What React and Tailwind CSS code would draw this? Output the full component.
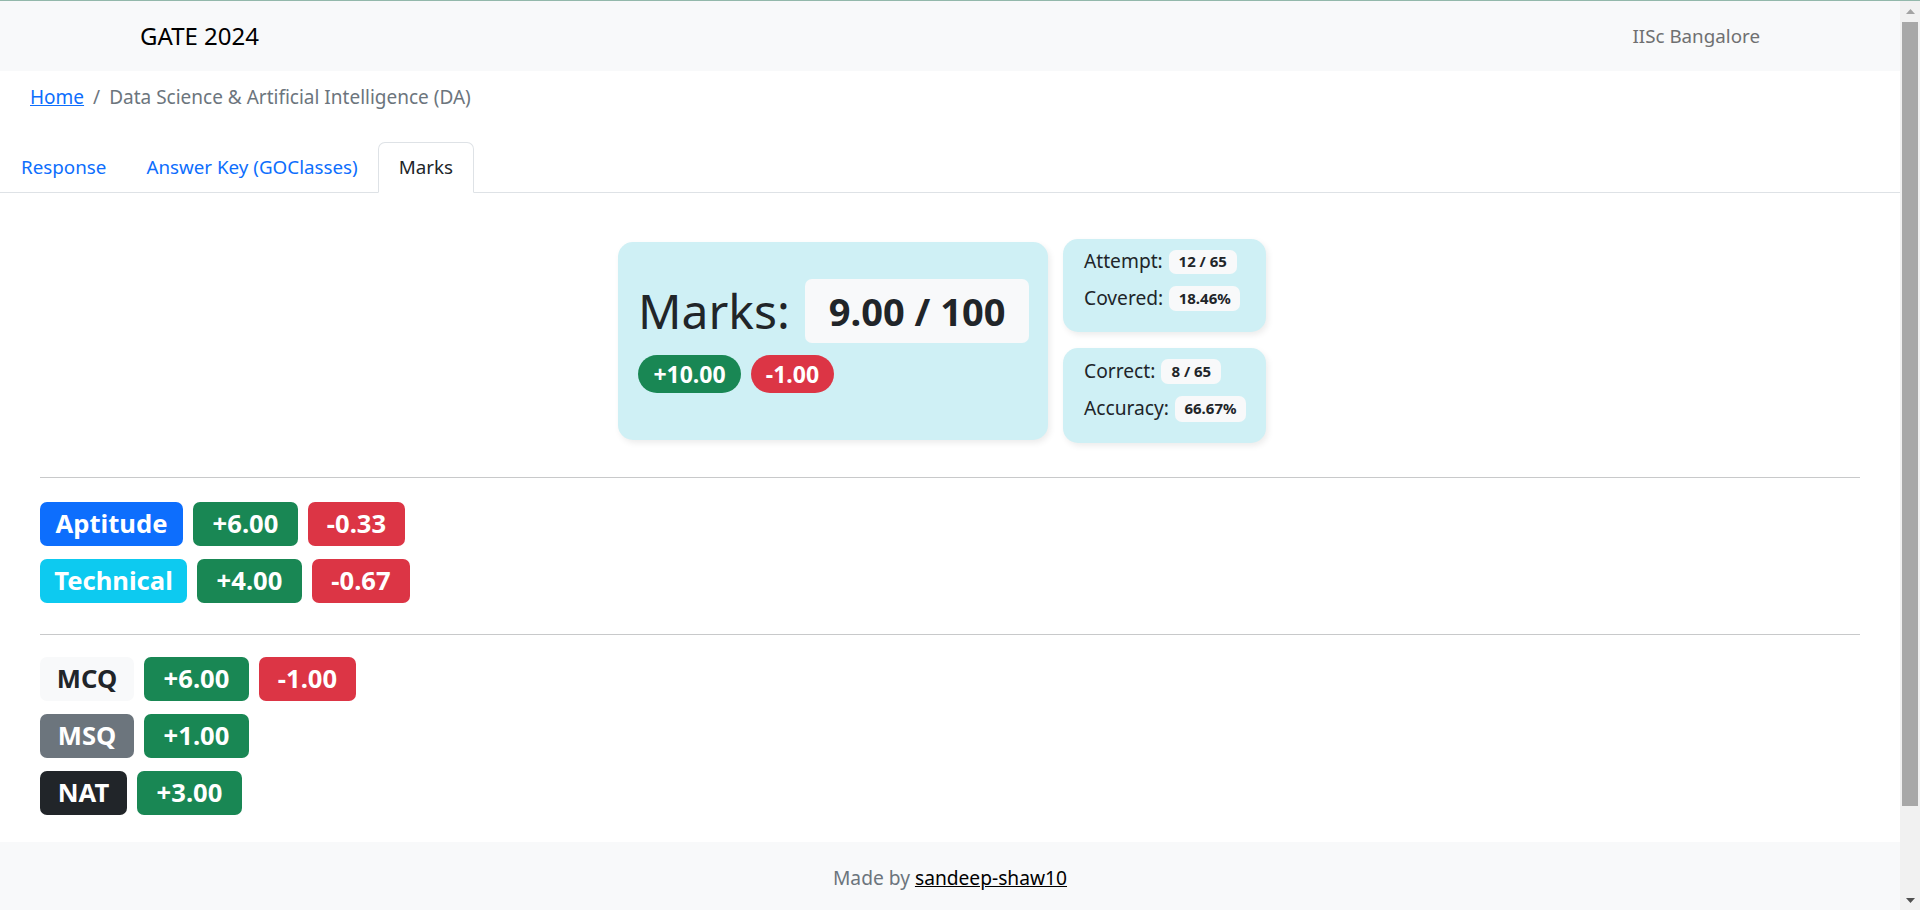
export default function App() {
  const big = "flex h-[44px] items-center justify-center rounded-[7px] text-[25.6px] font-bold leading-none";
  return (
    <div className="flex h-[910px] w-[1920px] flex-col overflow-hidden bg-white font-['Noto_Sans',sans-serif] text-[#212529]">
      <div className="h-px w-full bg-[#93b8ab]" />
      <div className="flex min-h-0 flex-1">
        <div className="flex w-[1900px] flex-col">
          {/* navbar */}
          <div className="flex h-[70px] items-center justify-between bg-[#f8f9fa] px-[140px]">
            <span className="text-[24px] text-black">GATE 2024</span>
            <span className="text-[18.8px] text-[#6f7071]">IISc Bangalore</span>
          </div>
          {/* breadcrumb */}
          <div className="flex h-[71px] items-start px-[30px] pt-[12px] text-[19px]">
            <a href="#" className="text-[#0d6efd] underline">Home</a>
            <span className="px-[9px] text-[#6c757d]">/</span>
            <span className="text-[#6c757d]">Data Science &amp; Artificial Intelligence (DA)</span>
          </div>
          {/* tabs */}
          <div className="flex h-[51px] border-b border-[#dee2e6] text-[18.8px]">
            <div className="flex items-center pl-[21px] pr-[20px] text-[#0d6efd]">Response</div>
            <div className="flex items-center px-[20px] text-[#0d6efd]">Answer Key (GOClasses)</div>
            <div className="-mb-px flex items-center rounded-t-[7px] border border-[#dee2e6] border-b-white bg-white px-[20px] text-[#212529]">Marks</div>
          </div>
          {/* content */}
          <div className="flex flex-1 flex-col">
            <div className="mt-[46px] flex justify-center gap-[15px] pr-[16px]">
              <div className="my-[3px] flex w-[430px] flex-col justify-center rounded-[15px] bg-[#cff0f5] pb-[10px] pl-[20px] shadow-[2px_3px_6px_rgba(0,0,0,0.08)]">
                <div className="flex items-center gap-[15px]">
                  <span className="text-[48px] leading-none">Marks:</span>
                  <span className="flex h-[64px] items-center rounded-[7px] bg-[#f8f9fa] px-[24px] text-[38px] font-bold">9.00 / 100</span>
                </div>
                <div className="mt-[12px] flex gap-[10px]">
                  <span className="flex h-[38px] w-[103px] items-center justify-center rounded-full bg-[#198754] text-[23px] font-bold text-white">+10.00</span>
                  <span className="flex h-[38px] w-[83px] items-center justify-center rounded-full bg-[#dc3545] text-[23px] font-bold text-white">-1.00</span>
                </div>
              </div>
              <div className="flex w-[203px] flex-col gap-[16px]">
                <div className="flex h-[93px] flex-col gap-[8px] rounded-[15px] bg-[#cff0f5] pl-[21px] pt-[8px] shadow-[2px_3px_6px_rgba(0,0,0,0.08)]">
                  <div className="flex h-[29px] items-center gap-[6px] text-[19.2px]">
                    <span>Attempt:</span>
                    <span className="flex h-[24px] w-[68px] items-center justify-center rounded-[7px] bg-[#f8f9fa] text-[15px] font-bold">12 / 65</span>
                  </div>
                  <div className="flex h-[29px] items-center gap-[6px] text-[19.2px]">
                    <span>Covered:</span>
                    <span className="flex h-[25px] w-[71px] items-center justify-center rounded-[7px] bg-[#f8f9fa] text-[15px] font-bold">18.46%</span>
                  </div>
                </div>
                <div className="flex h-[95px] flex-col gap-[8px] rounded-[15px] bg-[#cff0f5] pl-[21px] pt-[9px] shadow-[2px_3px_6px_rgba(0,0,0,0.08)]">
                  <div className="flex h-[29px] items-center gap-[6px] text-[19.2px]">
                    <span>Correct:</span>
                    <span className="flex h-[25px] w-[60px] items-center justify-center rounded-[7px] bg-[#f8f9fa] text-[15px] font-bold">8 / 65</span>
                  </div>
                  <div className="flex h-[29px] items-center gap-[6px] text-[19.2px]">
                    <span>Accuracy:</span>
                    <span className="flex h-[26px] w-[71px] items-center justify-center rounded-[7px] bg-[#f8f9fa] text-[15px] font-bold">66.67%</span>
                  </div>
                </div>
              </div>
            </div>

            <div className="mx-[40px] mt-[34px] border-t border-[#c8c9ca]" />

            <div className="mx-[40px] mt-[24px] flex flex-col gap-[13px]">
              <div className="flex gap-[10px]">
                <span className={big + " w-[143px] bg-[#0d6efd] text-white"}>Aptitude</span>
                <span className={big + " w-[105px] bg-[#198754] text-white"}>+6.00</span>
                <span className={big + " w-[97px] bg-[#dc3545] text-white"}>-0.33</span>
              </div>
              <div className="flex gap-[10px]">
                <span className={big + " w-[147px] bg-[#0dcaf0] text-white"}>Technical</span>
                <span className={big + " w-[105px] bg-[#198754] text-white"}>+4.00</span>
                <span className={big + " w-[98px] bg-[#dc3545] text-white"}>-0.67</span>
              </div>
            </div>

            <div className="mx-[40px] mt-[31px] border-t border-[#c8c9ca]" />

            <div className="mx-[40px] mt-[22px] flex flex-col gap-[13px]">
              <div className="flex gap-[10px]">
                <span className={big + " w-[94px] bg-[#f8f9fa] text-[#212529]"}>MCQ</span>
                <span className={big + " w-[105px] bg-[#198754] text-white"}>+6.00</span>
                <span className={big + " w-[97px] bg-[#dc3545] text-white"}>-1.00</span>
              </div>
              <div className="flex gap-[10px]">
                <span className={big + " w-[94px] bg-[#6c757d] text-white"}>MSQ</span>
                <span className={big + " w-[105px] bg-[#198754] text-white"}>+1.00</span>
              </div>
              <div className="flex gap-[10px]">
                <span className={big + " w-[87px] bg-[#212529] text-white"}>NAT</span>
                <span className={big + " w-[105px] bg-[#198754] text-white"}>+3.00</span>
              </div>
            </div>
          </div>
          {/* footer */}
          <div className="flex h-[68px] items-start justify-center bg-[#f8f9fa] pt-[22px] text-[19.2px]">
            <span className="text-[#6c757d]">Made by&nbsp;</span>
            <a href="#" className="text-black underline">sandeep-shaw10</a>
          </div>
        </div>
        {/* scrollbar */}
        <div className="flex w-[20px] flex-col items-center bg-[#f1f1f1]">
          <div className="flex h-[21px] items-center justify-center">
            <svg width="9" height="5" viewBox="0 0 9 5"><path d="M0 5 L4.5 0 L9 5 Z" fill="#a3a3a3" /></svg>
          </div>
          <div className="h-[784px] w-[16px] bg-[#a8a8a8]" />
          <div className="flex-1" />
          <div className="flex h-[20px] items-center justify-center">
            <svg width="9" height="5" viewBox="0 0 9 5"><path d="M0 0 L4.5 5 L9 0 Z" fill="#505050" /></svg>
          </div>
        </div>
      </div>
    </div>
  );
}
